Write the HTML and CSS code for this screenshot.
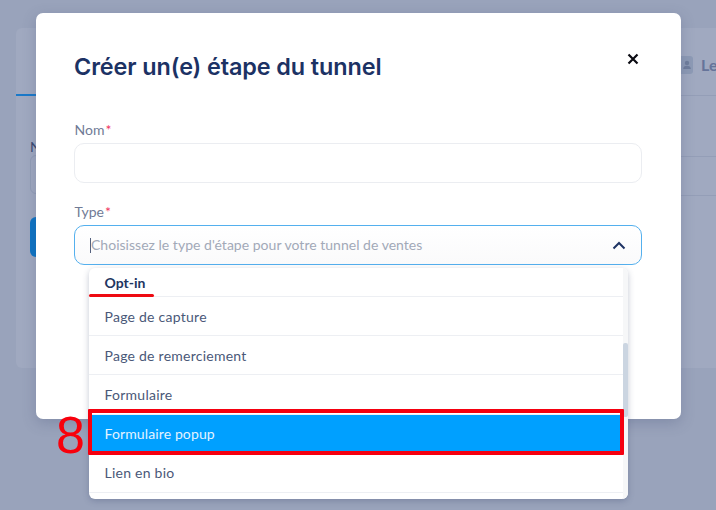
FILE: index.html
```html
<!DOCTYPE html>
<html lang="fr">
<head>
<meta charset="utf-8">
<title>Créer un(e) étape du tunnel</title>
<link rel="stylesheet" href="styles.css">
</head>
<body>
<div class="page">
  <div class="bg-card">
    <div class="bg-tabs">
      <span class="bg-tab-line"></span>
      <div class="bg-tab-user">
        <span class="bg-avatar"><svg viewBox="0 0 12 12" width="12" height="12"><circle cx="6" cy="4" r="2.2" fill="#6f7d9c"/><path d="M2.200 10c0-2.200 1.700-3.200 3.800-3.200s3.800 1 3.800 3.200z" fill="#6f7d9c"/></svg></span>
        <span class="bg-le">Le</span>
      </div>
    </div>
    <div class="bg-body">
      <div class="bg-label">N</div>
      <div class="bg-input"></div>
      <div class="bg-button"></div>
      <div class="bg-rows"><i></i><i></i></div>
    </div>
  </div>

  <section class="modal">
    <header class="modal-head">
      <h1 class="modal-title">Créer un(e) étape du tunnel</h1>
      <svg class="close" viewBox="0 0 12 12" width="12" height="12"><path d="M1.500 1.500l9 9M10.500 1.500l-9 9" stroke="#0b0b12" stroke-width="2.200" fill="none"/></svg>
    </header>
    <div class="field">
      <label class="label">Nom<span class="req">*</span></label>
      <div class="input"></div>
    </div>
    <div class="field">
      <label class="label">Type<span class="req">*</span></label>
      <div class="input select">
        <span class="caret"></span>
        <span class="placeholder">Choisissez le type d'étape pour votre tunnel de ventes</span>
        <svg class="chevron" viewBox="0 0 14 9" width="14" height="9"><path d="M1.500 7.500L7 2l5.500 5.500" stroke="#1f3464" stroke-width="2" fill="none"/></svg>
      </div>
    </div>
  </section>

  <div class="dropdown">
    <ul class="menu">
      <li class="menu-item group">Opt-in</li>
      <li class="menu-item">Page de capture</li>
      <li class="menu-item">Page de remerciement</li>
      <li class="menu-item">Formulaire</li>
      <li class="menu-item active">Formulaire popup</li>
      <li class="menu-item last">Lien en bio</li>
    </ul>
    <div class="scrollbar"><span class="thumb"></span></div>
  </div>

  <span class="mark-line"></span>
  <span class="mark-box"></span>
  <span class="mark-num">8</span>
</div>
</body>
</html>
```
FILE: styles.css
```css
* { box-sizing: border-box; }
html, body { margin: 0; padding: 0; }
body { width: 716px; height: 510px; overflow: hidden; background: #99a3bb; font-family: "Lato", "Liberation Sans", sans-serif; }
.page { position: relative; width: 716px; height: 510px; overflow: hidden; }

.bg-card { margin: 28px 0 0 16px; height: 340px; background: #a0a9c0; border-radius: 6px 0 0 6px; }
.bg-tabs { height: 68px; display: flex; justify-content: space-between; align-items: flex-end; border-bottom: 1px solid #949eb7; position: relative; }
.bg-tab-line { width: 24px; height: 2px; background: #1a79c9; margin-bottom: -1px; }
.bg-tab-user { display: flex; align-items: center; gap: 8px; position: absolute; left: 664px; top: 27px; }
.bg-avatar { width: 13px; height: 18px; background: #8d9ab5; border-radius: 0 3px 3px 0; display: flex; align-items: center; justify-content: flex-end; }
.bg-le { font-size: 16px; color: #66749a; font-weight: 700; }
.bg-body { padding: 40px 0 0 14px; position: relative; }
.bg-label { font-size: 14px; color: #3a4a70; height: 20px; line-height: 18px; margin-top: 2px; }
.bg-input { width: 100px; height: 39px; border: 1px solid #929db6; border-radius: 6px; margin-top: -3px; }
.bg-button { width: 60px; height: 40px; background: #0d74c4; border-radius: 6px; margin-top: 23px; }
.bg-rows { position: absolute; left: 664px; top: 60px; width: 36px; }
.bg-rows i { display: block; height: 1px; background: #949eb7; }
.bg-rows i + i { margin-top: 38px; }

.modal { position: absolute; left: 36px; top: 13px; width: 644.500px; height: 406px; background: #fff; border-radius: 7px; padding: 0 38.500px 0 38px; box-shadow: 0 4px 14px rgba(60, 72, 110, .25); }
.modal-head { height: 99px; position: relative; padding-top: 39px; }
.modal-title { margin: 0; font: 600 23.400px/29px "Inter", "Liberation Sans", sans-serif; color: #1c3264; letter-spacing: -.1px; }
.close { position: absolute; right: 3.500px; top: 40px; }
.field { margin-bottom: 11px; }
.label { display: block; font-size: 14px; line-height: 18px; height: 31px; padding-top: 9px; padding-left: .5px; color: #707b96; font-weight: 400; }
.req { color: #f0365f; margin-left: 1px; }
.input { height: 40px; width: 568px; border: 1px solid #ebedf1; border-radius: 10px; background: #fff; }
.select { border-color: #54b0ee; display: flex; align-items: center; padding: 0 15px; background: linear-gradient(#fff, #fafafb); }
.caret { width: 1px; height: 15px; background: #55627f; flex: none; }
.placeholder { flex: 1; font-size: 14px; line-height: 16px; padding-bottom: 1px; color: #a2a9b8; letter-spacing: .02px; }
.chevron { flex: none; }

.dropdown { position: absolute; left: 89px; top: 268px; width: 539px; height: 231px; background: #fff; border-radius: 6px; box-shadow: 0 2px 6px rgba(60, 72, 110, .3); display: flex; overflow: hidden; }
.menu { list-style: none; margin: 0; padding: 0; flex: 1; }
.menu-item { height: 39.200px; line-height: 40px; padding-left: 15.500px; font-size: 14px; color: #4a5878; border-bottom: 1px solid #edeff3; letter-spacing: .25px; }
.group { height: 29px; line-height: 29px; font-weight: 700; color: #22355f; letter-spacing: 0; }
.active { background: #00a0ff; color: #e3f3ff; border-bottom-color: #00a0ff; letter-spacing: .12px; line-height: 38px; }
.last { line-height: 38px; }
.scrollbar { width: 5px; background: #f6f7f8; flex: none; position: relative; }
.thumb { position: absolute; left: 0; top: 75px; width: 5px; height: 74px; background: #cbd5e1; border-radius: 2px; }

.mark-line { position: absolute; left: 89px; top: 294px; width: 65px; height: 3px; background: #ee0a12; border-radius: 2px; }
.mark-box { position: absolute; left: 87.500px; top: 409px; width: 536.500px; height: 45.500px; border: 4px solid #f5000f; border-radius: 1px; }
.mark-num { position: absolute; left: 56px; top: 406px; font: 400 52px/58px "Liberation Sans", sans-serif; color: #f8000c; }
```
